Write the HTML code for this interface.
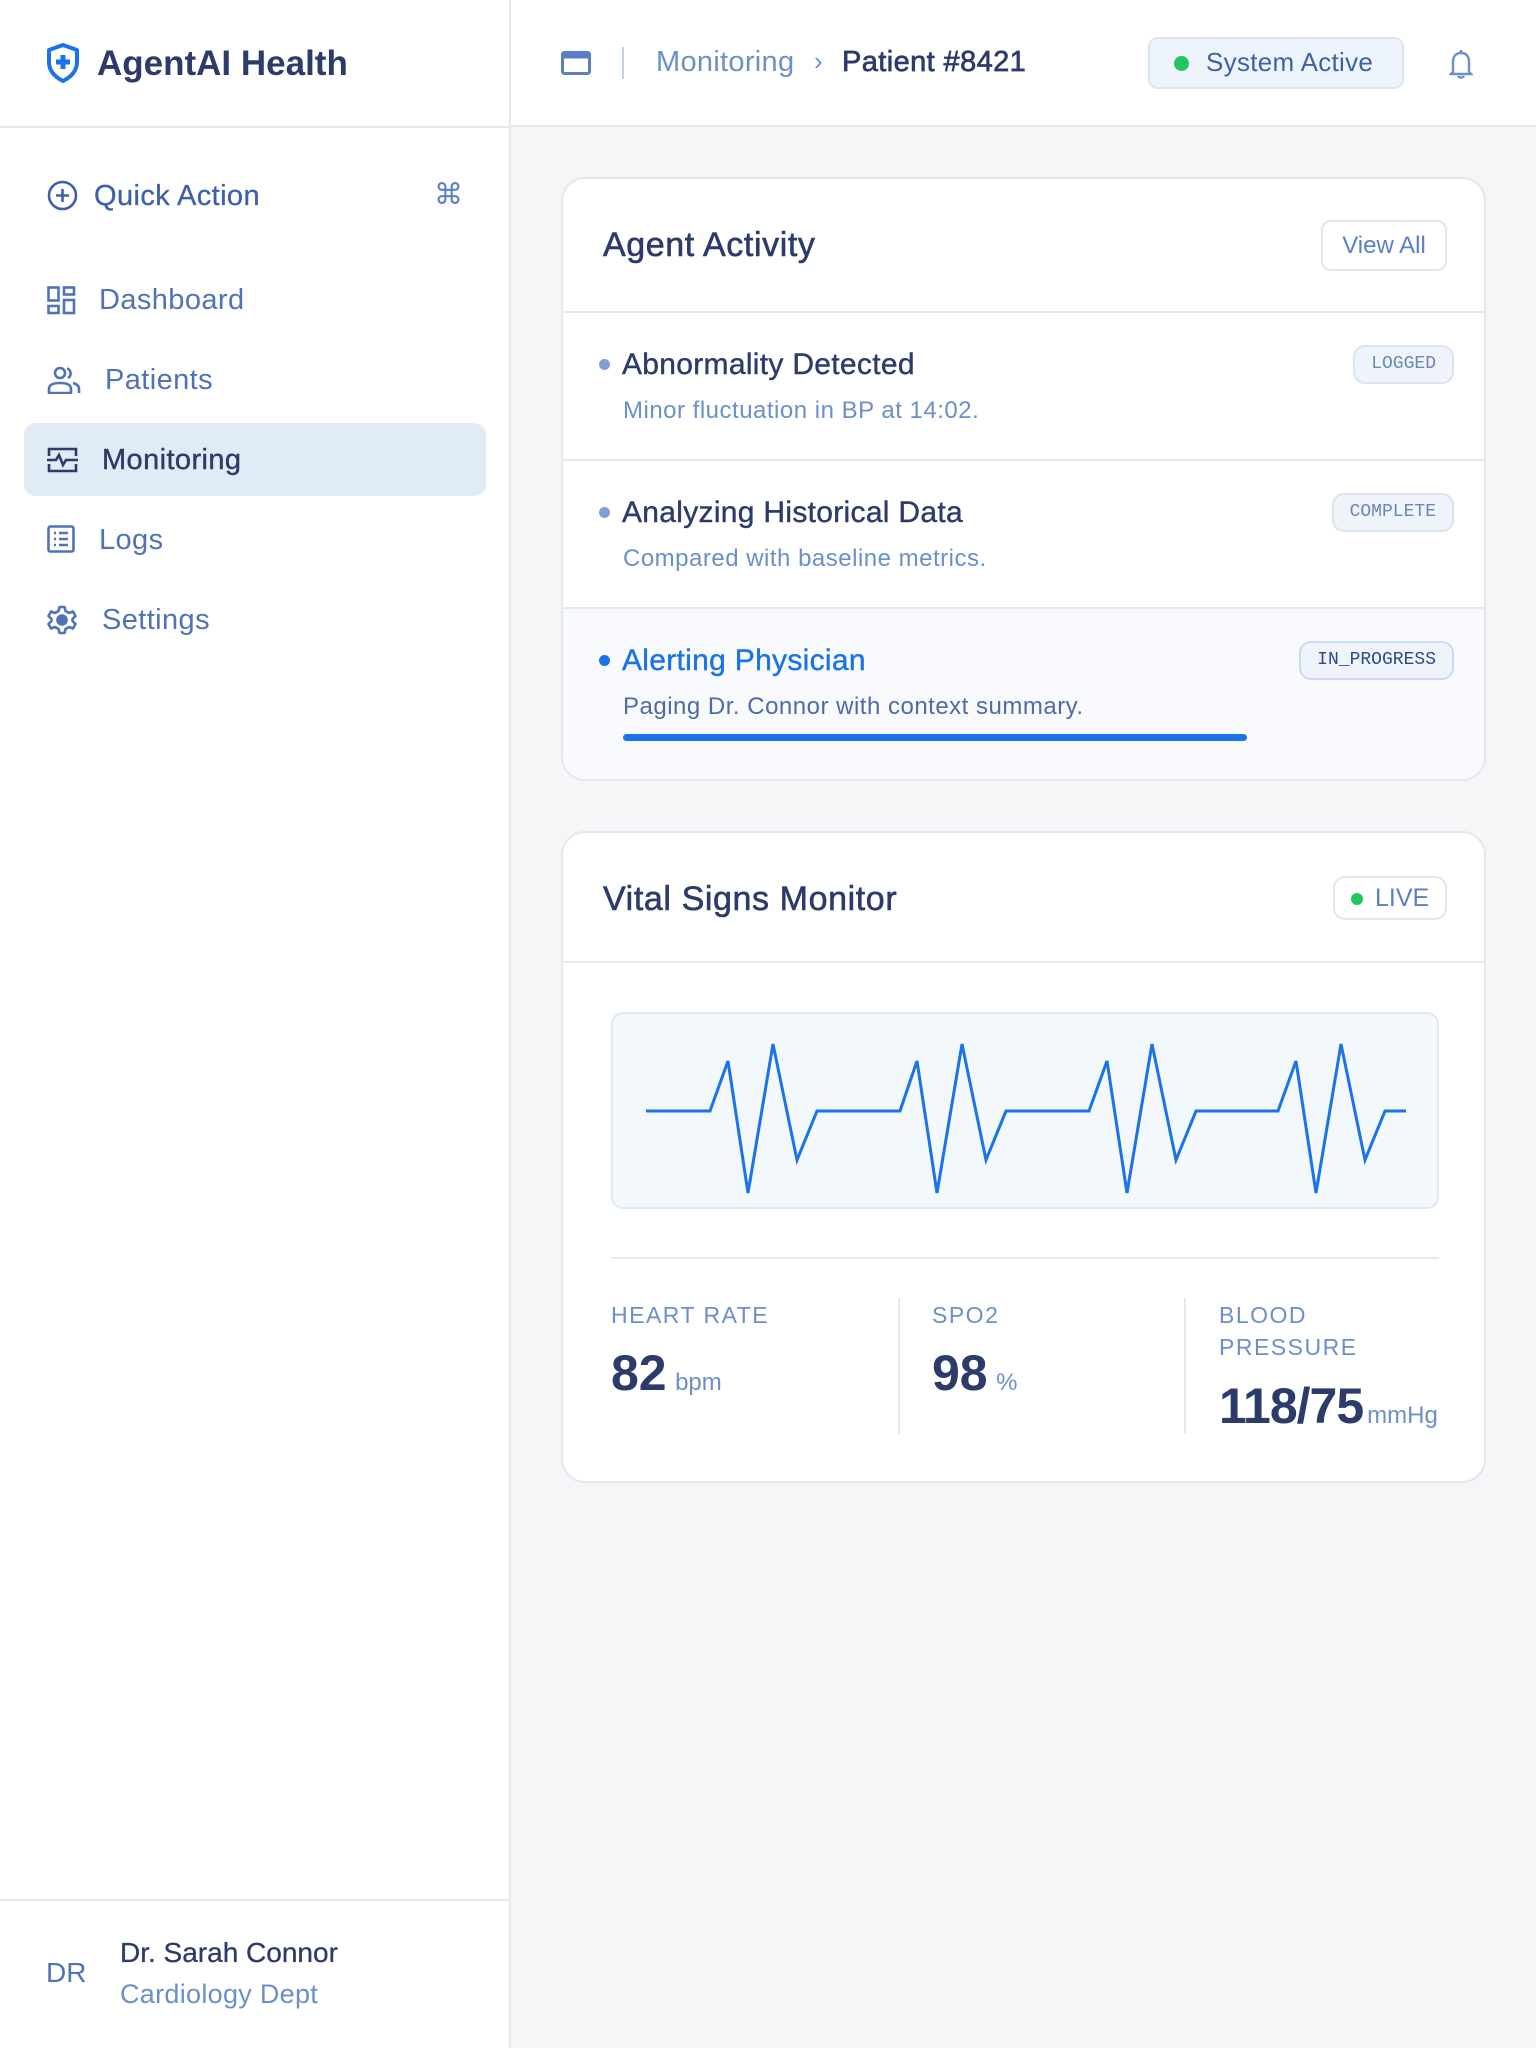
<!DOCTYPE html>
<html><head><meta charset="utf-8"><style>
*{margin:0;padding:0;box-sizing:border-box}
body{width:1536px;height:2048px;position:relative;background:#f4f6f8;font-family:"Liberation Sans",sans-serif;overflow:hidden}
.a{position:absolute;white-space:nowrap;line-height:1}
.m{-webkit-text-stroke:0.4px currentColor;letter-spacing:0.3px}
.side{position:absolute;left:0;top:0;width:511px;height:2048px;background:#fff;border-right:2px solid #e6e8ec}
.top{position:absolute;left:511px;top:0;width:1025px;height:127px;background:#fff;border-bottom:2px solid #e6e8ec}
.nav{color:#4f72b8;font-size:29px;letter-spacing:0.4px}
.card{position:absolute;left:561px;width:925px;background:#fff;border:2px solid #e4e8ee;border-radius:24px;overflow:hidden}
.badge{position:absolute;right:34px;height:39px;border:2px solid #dbe4f0;background:#eff4fb;border-radius:12px;font-family:"Liberation Mono",monospace;font-size:18px;color:#6b86b5;line-height:35px;padding:0 16px}
.row{position:absolute;left:0;width:925px;border-top:2px solid #e6eaf0}
.dot{position:absolute;left:36px;width:11px;height:11px;border-radius:50%;background:#7f9fd1}
.rt{position:absolute;left:59px;font-size:30px;color:#2c3b6a}
.rs{position:absolute;left:60px;font-size:24px;color:#6b8fc9;letter-spacing:0.5px}
.lbl{position:absolute;font-size:23px;color:#6b8fc9;letter-spacing:1.5px;line-height:32px}
.val{font-size:50px;font-weight:bold;color:#2c3b6a}
.unit{font-size:24px;color:#6b8fc9;margin-left:4px}
.ct{font-size:34px;color:#2c3b6a;-webkit-text-stroke:0.6px #2c3b6a;letter-spacing:0.6px}
</style></head><body>
<div class="side"></div>
<div class="a" style="left:0;top:126px;width:511px;border-top:2px solid #e6e8ec"></div>
<svg class="a" style="left:46px;top:43px" width="34" height="40" viewBox="0 0 34 40"><path d="M17 2 L31 7 V19 C31 28 25 34 17 38 C9 34 3 28 3 19 V7 Z" fill="none" stroke="#1a73e8" stroke-width="4" stroke-linejoin="round"/><path d="M17 12 V26 M10 19 H24" stroke="#1a73e8" stroke-width="5"/></svg>
<div class="a" style="left:97px;top:46px;font-size:35px;font-weight:bold;color:#2c3b6a">AgentAI Health</div>

<svg class="a" style="left:47px;top:180px" width="31" height="31" viewBox="0 0 31 31"><circle cx="15.5" cy="15.5" r="13.5" fill="none" stroke="#3f60a8" stroke-width="2.6"/><path d="M15.5 9 V22 M9 15.5 H22" stroke="#3f60a8" stroke-width="2.6"/></svg>
<div class="a nav" style="left:94px;top:182px;color:#3f60a8;-webkit-text-stroke:0.3px #3f60a8">Quick Action</div>
<div class="a" style="left:434px;top:181px;font-size:29px;color:#5a7fc4">⌘</div>

<svg class="a" style="left:47px;top:286px" width="29" height="29" viewBox="0 0 29 29" fill="none" stroke="#4f72b8" stroke-width="2.6"><rect x="1.5" y="1.5" width="10" height="13"/><rect x="1.5" y="20" width="10" height="7"/><rect x="17" y="1.5" width="10" height="7"/><rect x="17" y="14" width="10" height="13"/></svg>
<div class="a nav" style="left:99px;top:286px">Dashboard</div>
<svg class="a" style="left:47px;top:366px" width="34" height="28" viewBox="0 0 34 28" fill="none" stroke="#4f72b8" stroke-width="2.6"><circle cx="13" cy="7" r="5"/><path d="M2 27 V23 C2 19 6 17 13 17 C20 17 24 19 24 23 V27 Z"/><path d="M20 2.5 C24 3 25 10 21 12 M26 17 C30 18 32 20 32 23 V27"/></svg>
<div class="a nav" style="left:105px;top:366px">Patients</div>

<div class="a" style="left:24px;top:423px;width:462px;height:73px;background:#e1ebf6;border-radius:12px"></div>
<svg class="a" style="left:47px;top:447px" width="31" height="26" viewBox="0 0 31 26" fill="none" stroke="#2c3b6a" stroke-width="2.6"><path d="M2 9 V2 H29 V9 M2 17 V24 H29 V17"/><path d="M0 13 H9 L12 8 L16 18 L19 13 H31"/></svg>
<div class="a nav" style="left:102px;top:446px;color:#2c3b6a;-webkit-text-stroke:0.4px #2c3b6a">Monitoring</div>

<svg class="a" style="left:47px;top:525px" width="28" height="28" viewBox="0 0 28 28" fill="none" stroke="#4f72b8" stroke-width="2.6"><rect x="1.5" y="1.5" width="25" height="25" rx="2"/><path d="M7 8 H9 M12 8 H21 M7 14 H9 M12 14 H21 M7 20 H9 M12 20 H21"/></svg>
<div class="a nav" style="left:99px;top:526px">Logs</div>
<svg class="a" style="left:47px;top:605px" width="30" height="30" viewBox="0 0 30 30" fill="none" stroke="#4f72b8" stroke-width="2.6"><path d="M12.5 2 H17.5 L18.5 6 L22 8 L26 6.5 L28.5 11 L25.5 14 V16 L28.5 19 L26 23.5 L22 22 L18.5 24 L17.5 28 H12.5 L11.5 24 L8 22 L4 23.5 L1.5 19 L4.5 16 V14 L1.5 11 L4 6.5 L8 8 L11.5 6 Z" stroke-linejoin="round"/><circle cx="15" cy="15" r="4.5" fill="#4f72b8"/></svg>
<div class="a nav" style="left:102px;top:606px">Settings</div>

<div class="a" style="left:0;top:1899px;width:511px;border-top:2px solid #e6e8ec"></div>
<div class="a" style="left:46px;top:1959px;font-size:28px;color:#4f72b8">DR</div>
<div class="a" style="left:120px;top:1939px;font-size:28px;color:#2c3b6a;-webkit-text-stroke:0.3px #2c3b6a">Dr. Sarah Connor</div>
<div class="a" style="left:120px;top:1981px;font-size:27px;color:#6b8fc9;letter-spacing:0.3px">Cardiology Dept</div>

<div class="top"></div>
<svg class="a" style="left:561px;top:51px" width="30" height="24" viewBox="0 0 30 24"><rect x="1.5" y="1.5" width="27" height="21" rx="2" fill="none" stroke="#5a7fc4" stroke-width="3"/><rect x="1.5" y="1.5" width="27" height="6" fill="#5a7fc4"/></svg>
<div class="a" style="left:622px;top:47px;width:2px;height:32px;background:#c5d3ea"></div>
<div class="a" style="left:656px;top:48px;font-size:29px;color:#6b8fc9;letter-spacing:0.3px">Monitoring</div>
<div class="a" style="left:814px;top:48px;font-size:26px;color:#6b8fc9">›</div>
<div class="a" style="left:842px;top:48px;font-size:29px;color:#2c3b6a;-webkit-text-stroke:0.7px #2c3b6a;letter-spacing:0.4px">Patient #8421</div>
<div class="a" style="left:1148px;top:37px;width:256px;height:52px;background:#eef4fb;border:2px solid #dbe4f0;border-radius:10px"></div>
<div class="a" style="left:1174px;top:56px;width:15px;height:15px;border-radius:50%;background:#22c55e"></div>
<div class="a" style="left:1206px;top:49px;font-size:26px;color:#3f60a8;letter-spacing:0.3px">System Active</div>
<svg class="a" style="left:1449px;top:48px" width="24" height="32" viewBox="0 0 24 32" fill="none" stroke="#6b8fc9" stroke-width="2.4"><path d="M12 2 V4 M4 24 V14 C4 8 7 5 12 5 C17 5 20 8 20 14 V24 L22 26 H2 Z M9 28 C10 30 14 30 15 28"/></svg>

<!-- card 1 -->
<div class="card" style="top:177px;height:604px">
  <div class="a ct" style="left:40px;top:49px">Agent Activity</div>
  <div class="a" style="left:758px;top:41px;width:126px;height:51px;border:2px solid #e2e6ec;border-radius:10px;font-size:24px;color:#5a7fc4;line-height:47px;text-align:center">View All</div>
  <div class="row" style="top:132px;height:148px">
    <div class="dot" style="top:46px"></div>
    <div class="a rt m" style="top:37px">Abnormality Detected</div>
    <div class="a rs" style="top:86px">Minor fluctuation in BP at 14:02.</div>
    <div class="badge" style="top:32px">LOGGED</div>
  </div>
  <div class="row" style="top:280px;height:148px">
    <div class="dot" style="top:46px"></div>
    <div class="a rt m" style="top:37px">Analyzing Historical Data</div>
    <div class="a rs" style="top:86px">Compared with baseline metrics.</div>
    <div class="badge" style="top:32px">COMPLETE</div>
  </div>
  <div class="row" style="top:428px;height:180px;background:#f8fafd">
    <div class="dot" style="top:46px;background:#1a73e8"></div>
    <div class="a rt m" style="top:37px;color:#1a73e8">Alerting Physician</div>
    <div class="a rs" style="top:86px;color:#4f6aa8">Paging Dr. Connor with context summary.</div>
    <div class="badge" style="top:32px;border-color:#c9dbf3;color:#2c4a8a">IN_PROGRESS</div>
    <div class="a" style="left:60px;top:125px;width:624px;height:7px;border-radius:4px;background:#1a73e8"></div>
  </div>
</div>

<!-- card 2 -->
<div class="card" style="top:831px;height:652px">
  <div class="a ct" style="left:40px;top:49px">Vital Signs Monitor</div>
  <div class="a" style="left:770px;top:43px;width:114px;height:44px;border:2px solid #e2e6ec;border-radius:12px"></div>
  <div class="a" style="left:788px;top:60px;width:12px;height:12px;border-radius:50%;background:#22c55e"></div>
  <div class="a" style="left:812px;top:53px;font-size:25px;color:#5a7fc4">LIVE</div>
  <div class="a" style="left:0;top:128px;width:925px;border-top:2px solid #e6eaf0"></div>
  <div class="a" style="left:48px;top:179px;width:828px;height:197px;background:#f3f8fd;border:2px solid #dfe8f3;border-radius:12px"></div>
  <svg class="a" style="left:49px;top:180px" width="827" height="196" viewBox="0 0 827 196"><polyline fill="none" stroke="#1a73e8" stroke-width="3" stroke-linejoin="miter" points="34,98 98,98 116,48 136,180 161,31 185,147 205,98 288,98 305,48 325,180 350,31 374,147 394,98 477,98 495,48 515,180 540,31 564,147 584,98 666,98 684,48 704,180 729,31 753,147 773,98 794,98"/></svg>
  <div class="a" style="left:48px;top:424px;width:828px;border-top:2px solid #e6e8ec"></div>
  <div class="a" style="left:335px;top:465px;width:2px;height:136px;background:#e6eaf0"></div>
  <div class="a" style="left:621px;top:465px;width:2px;height:136px;background:#e6eaf0"></div>
  <div class="lbl" style="left:48px;top:466px">HEART RATE</div>
  <div class="a" style="left:48px;top:515px"><span class="val">82</span> <span class="unit">bpm</span></div>
  <div class="lbl" style="left:369px;top:466px">SPO2</div>
  <div class="a" style="left:369px;top:515px"><span class="val">98</span> <span class="unit">%</span></div>
  <div class="lbl" style="left:656px;top:466px">BLOOD<br>PRESSURE</div>
  <div class="a" style="left:656px;top:548px"><span class="val" style="letter-spacing:-1px">118/75</span><span class="unit">mmHg</span></div>
</div>
</body></html>
